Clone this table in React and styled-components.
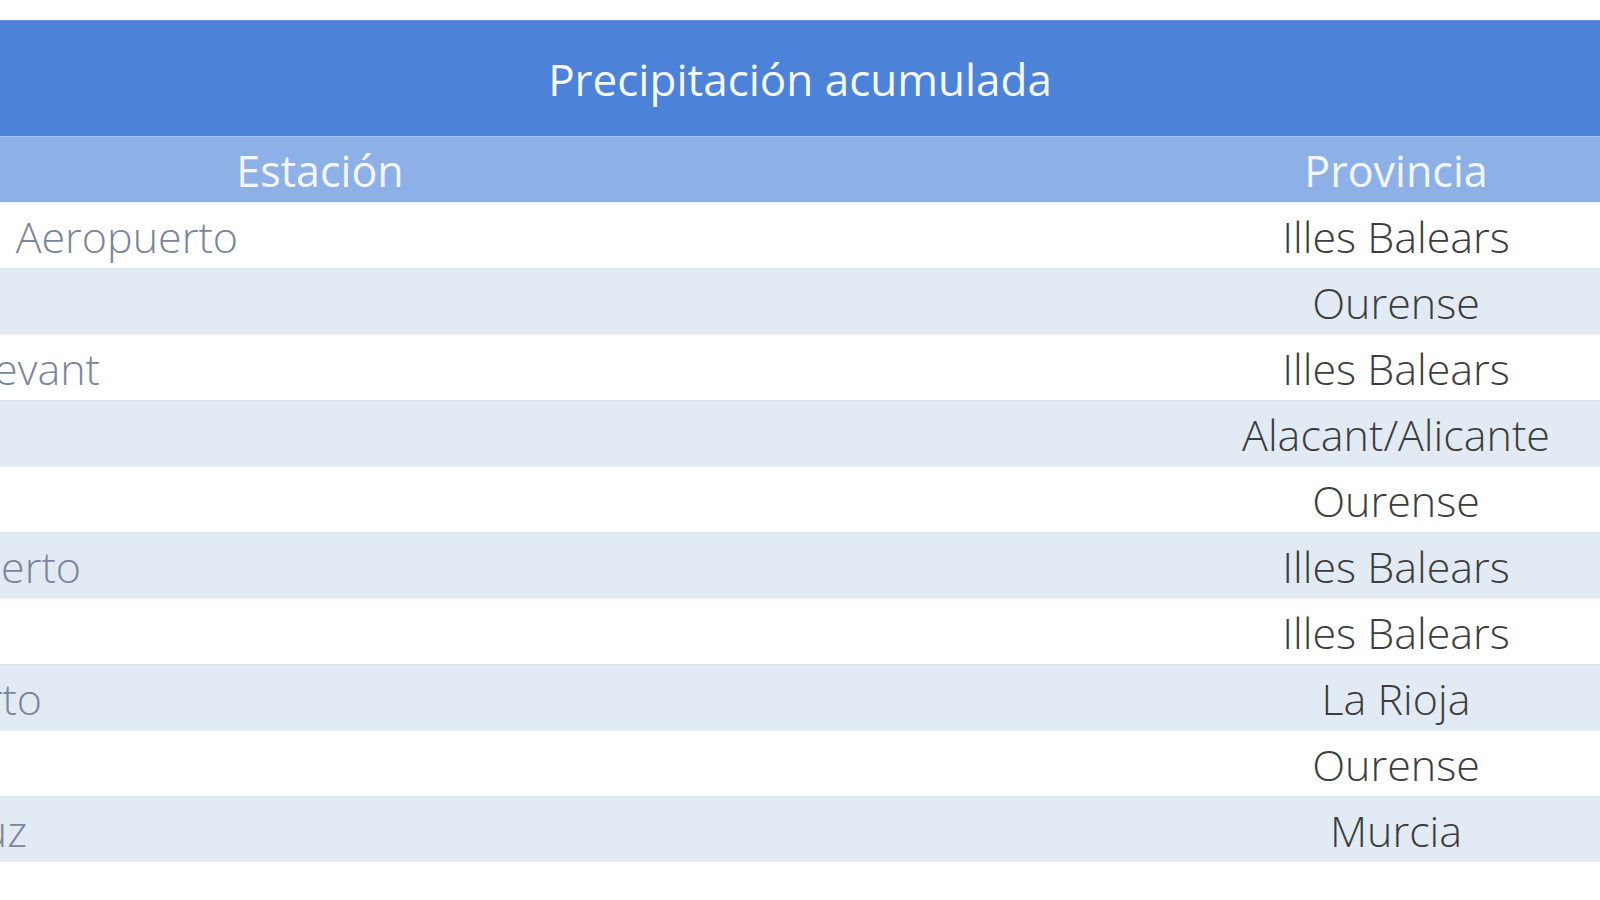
import React from "react";
import styled, { createGlobalStyle } from "styled-components";

const Global = createGlobalStyle`
  html, body { margin: 0; padding: 0; background: #ffffff; }
  body { font-family: "Open Sans", "Noto Sans", "DejaVu Sans", sans-serif; }
`;

const HIDDEN = 552; // width of the station column lying left of the view

const Page = styled.div`
  width: 1600px;
  height: 900px;
  padding-top: 20px;
  box-sizing: border-box;
  overflow: hidden;
  background: #ffffff;
`;

const TitleBar = styled.div`
  height: 116px;
  display: flex;
  align-items: center;
  justify-content: center;
  background: #4c82d8;
  border-top: 1px solid #6f98dc;
  box-sizing: border-box;
  color: #f4f8ff;
  font-size: 44px;
  font-weight: 400;
`;

const Table = styled.div`
  margin-left: -${HIDDEN}px;
  display: flex;
  flex-direction: column;
`;

const Row = styled.div`
  display: grid;
  grid-template-columns: ${1192 + HIDDEN}px 408px;
  height: 66px;
  box-sizing: border-box;
  background: ${(p) => (p.$alt ? "#e2ebf3" : "#ffffff")};
  border-top: 1px solid ${(p) => (p.$alt ? "#dbe5ee" : "#f3f6f9")};
`;

const HeadRow = styled(Row)`
  background: #8db0e7;
  border-top: 1px solid #a6c2ee;
`;

const HeadCell = styled.div`
  display: flex;
  align-items: center;
  justify-content: center;
  color: #f2f7ff;
  font-size: 43px;
  font-weight: 400;
  padding-top: 2px;
`;

const StationCell = styled.div`
  display: flex;
  align-items: center;
  padding-top: 1px;
`;

const NameBox = styled.div`
  width: ${(p) => HIDDEN + p.$end}px;
  display: flex;
  justify-content: flex-end;
  overflow: visible;
`;

const Name = styled.span`
  flex-shrink: 0;
  white-space: nowrap;
  color: #7b859b;
  font-size: 43px;
  font-weight: 300;
`;

const ProvinceCell = styled.div`
  display: flex;
  align-items: center;
  justify-content: center;
  white-space: nowrap;
  color: #3d3d3d;
  font-size: 43px;
  font-weight: 300;
  padding-top: 1px;
`;

const rows = [
  { name: "Menorca\u2002Aeropuerto", end: 238, prov: "Illes Balears" },
  { name: "Ourense", end: -40, prov: "Ourense" },
  { name: "Es Llevant", end: 100, prov: "Illes Balears" },
  { name: "Alicante", end: -40, prov: "Alacant/Alicante" },
  { name: "Ourense", end: -40, prov: "Ourense" },
  { name: "Ibiza, Aeropuerto", end: 81, prov: "Illes Balears" },
  { name: "Palma, Puerto", end: 2, prov: "Illes Balears" },
  { name: "Logroño, Aeropuerto", end: 42, prov: "La Rioja" },
  { name: "Ourense", end: -40, prov: "Ourense" },
  { name: "Caravaca de la Cruz", end: 27, prov: "Murcia" },
];

export default function App() {
  return (
    <>
      <Global />
      <Page>
        <TitleBar>Precipitación acumulada</TitleBar>
        <Table>
          <HeadRow>
            <HeadCell>Estación</HeadCell>
            <HeadCell>Provincia</HeadCell>
          </HeadRow>
          {rows.map((r, i) => (
            <Row key={i} $alt={i % 2 === 1}>
              <StationCell>
                <NameBox $end={r.end}>
                  <Name>{r.name}</Name>
                </NameBox>
              </StationCell>
              <ProvinceCell>{r.prov}</ProvinceCell>
            </Row>
          ))}
        </Table>
      </Page>
    </>
  );
}
